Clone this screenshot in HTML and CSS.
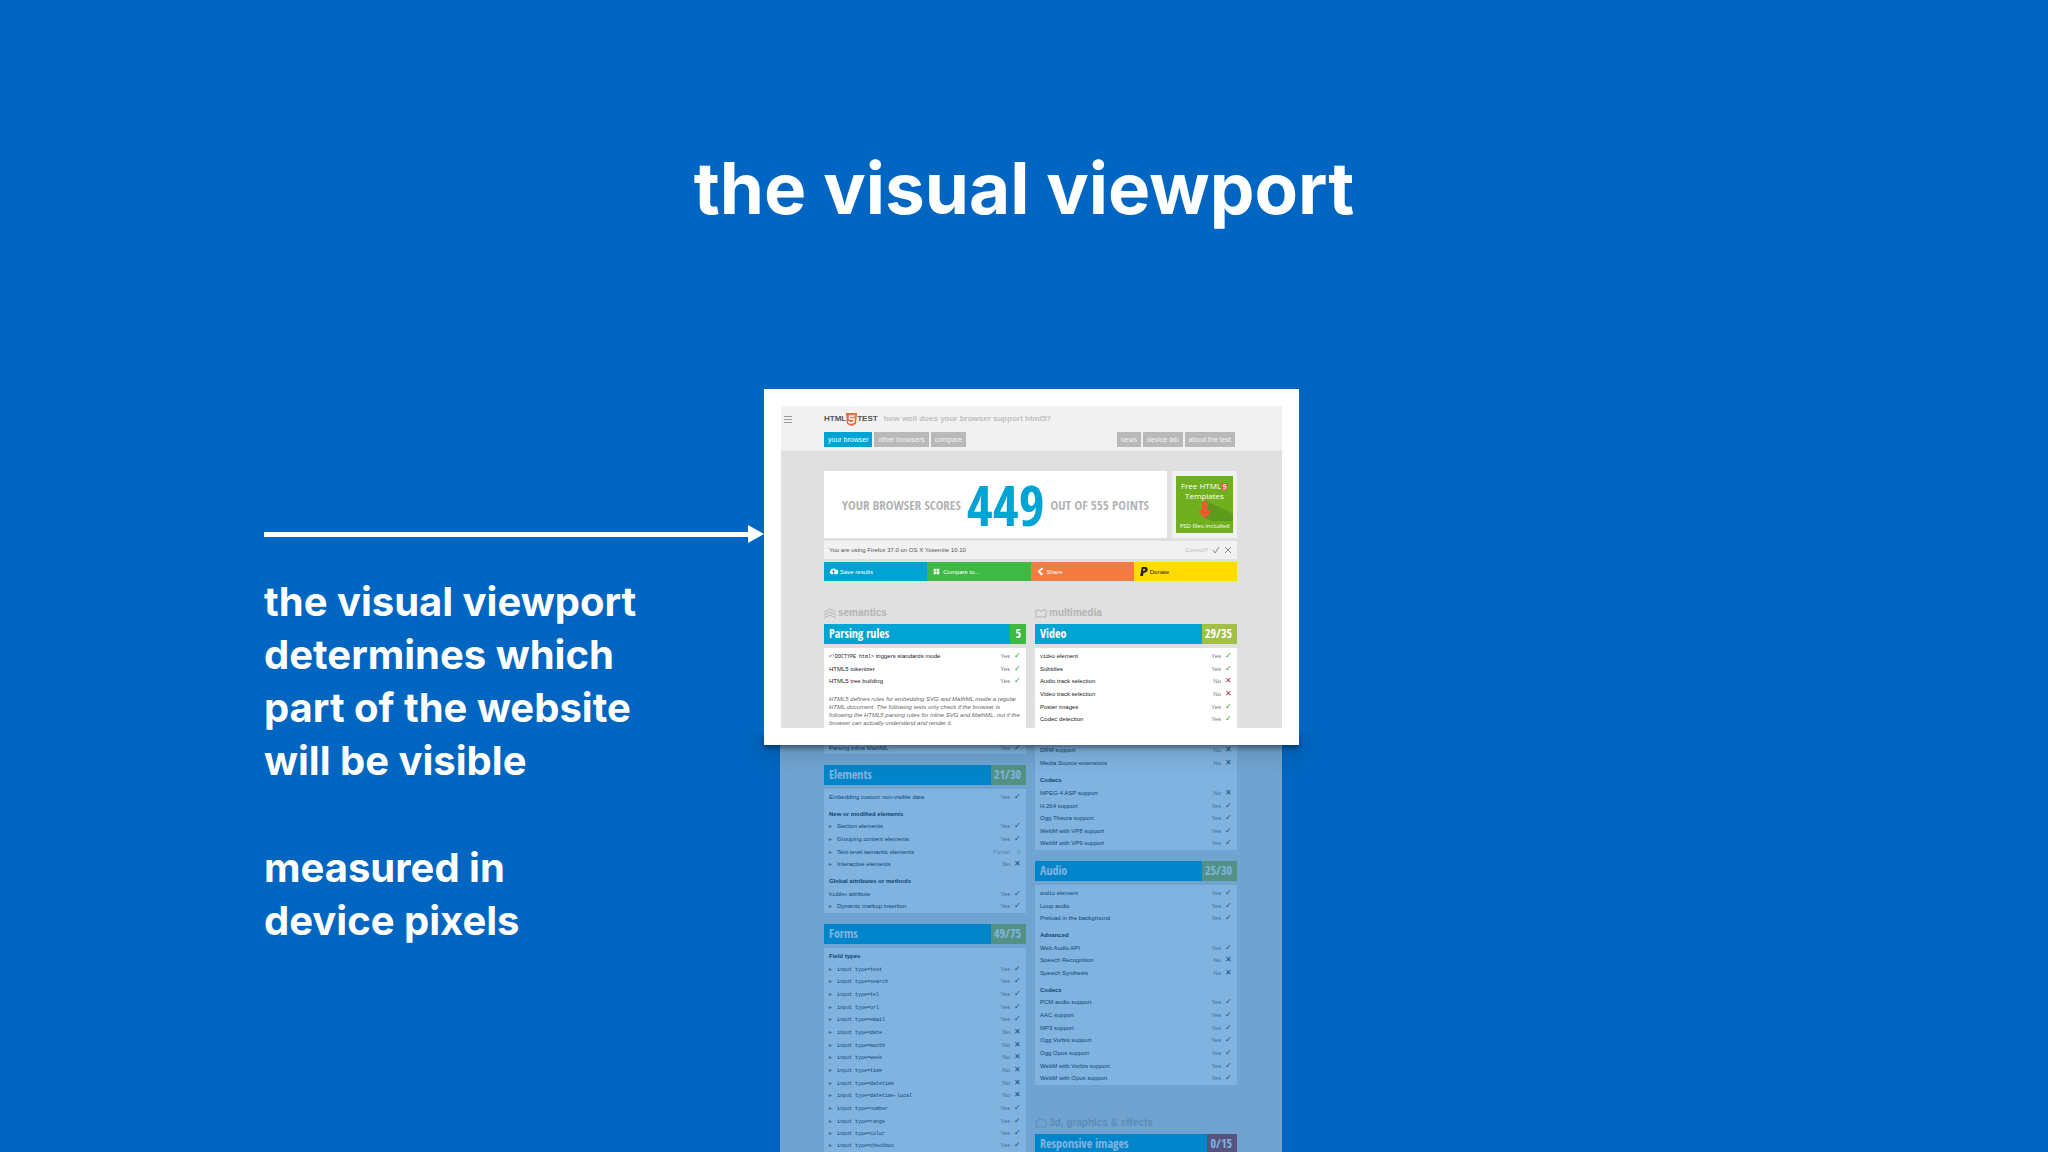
FILE: index.html
```
<!DOCTYPE html>
<html lang="en">
<head>
    <meta charset="UTF-8">
    <meta name="viewport" content="width=device-width, initial-scale=1.0">
    <title>The visual viewport</title>
    <link rel="stylesheet" href="styles.css">
</head>
<body>
    <h1>the visual viewport</h1>

    <main class="slide">
        <section class="notes">
            <div class="arrow">
                <span class="arrow-line"></span>
                <span class="arrow-head"></span>
            </div>
            <p>the visual viewport<br>determines which<br>part of the website<br>will be visible</p>
            <p>measured in<br>device pixels</p>
        </section>

        <section class="device">
            <div class="viewport">
                <header class="site-header">
                    <button class="menu" aria-label="Menu"></button>
                    <div class="brand">
                        <span class="logo">HTML<svg class="shield" viewBox="0 0 22 26"><path fill="#e8663c" d="M0 0h22l-2 22-9 4-9-4z"/><path fill="#f0803f" d="M11 2v22l7-3 2-19z"/><path fill="none" stroke="#fff" stroke-width="3" d="M17 6H7v6h9l-1 7-4 1-5-1-.5-3"/></svg>TEST</span>
                        <span class="tagline">how well does your browser support html5?</span>
                    </div>
                    <nav class="tabs">
                        <a class="tab active" href="#">your browser</a>
                        <a class="tab" href="#">other browsers</a>
                        <a class="tab" href="#">compare</a>
                        <span class="spacer"></span>
                        <a class="tab" href="#">news</a>
                        <a class="tab" href="#">device lab</a>
                        <a class="tab" href="#">about the test</a>
                    </nav>
                </header>

                <div class="summary">
                    <div class="top">
                        <div class="score">
                            <span>YOUR BROWSER SCORES</span>
                            <strong>449</strong>
                            <span>OUT OF 555 POINTS</span>
                        </div>
                        <a class="ad" href="#">
                            <span class="ad-body">
                                <span>Free HTML<svg class="ad-shield" viewBox="0 0 22 26"><path fill="#e8553c" d="M0 0h22l-2 22-9 4-9-4z"/><path fill="none" stroke="#fff" stroke-width="3" d="M17 6H7v6h9l-1 7-4 1-5-1"/></svg><br>Templates</span>
                                <svg class="download" viewBox="0 0 57 20"><path fill="#5c9a1c" d="M33 1l24 12v7H36l-8-3z"/><path fill="#f0592f" d="M26 0h6v9h4l-7 9-7-9h4z"/></svg>
                                <small>PSD files included</small>
                            </span>
                        </a>
                    </div>
                    <div class="agent">
                        <span>You are using Firefox 37.0 on OS X Yosemite 10.10</span>
                        <span class="spacer"></span>
                        <span class="correct">Correct?</span>
                        <button aria-label="Correct"><svg viewBox="0 0 8 8"><path d="M1 4l2 3 4-6"/></svg></button>
                        <button aria-label="Wrong"><svg viewBox="0 0 8 8"><path d="M1 1l6 6M7 1L1 7"/></svg></button>
                    </div>
                    <div class="actions">
                        <button class="save"><svg viewBox="0 0 16 16"><path d="M4 13a4 4 0 0 1-1-7 5 5 0 0 1 9-1 4 4 0 0 1 1 8H9V9h2L8 5 5 9h2v4z"/></svg>Save results</button>
                        <button class="compare"><svg viewBox="0 0 16 16"><path d="M3 3h4v4H3zM8 3h5v4H8zM3 8h4v5H3zM8 8h5v5H8z"/></svg>Compare to...</button>
                        <button class="share"><svg viewBox="0 0 16 16"><path d="M10 1l3 2-6 5 6 5-3 2-7-7z"/></svg>Share</button>
                        <button class="donate"><svg viewBox="0 0 16 16"><path fill-rule="evenodd" d="M5 0h6c4 0 5 3 4 6s-4 4-7 4l-1 6H2zM8 3L7 7c3 0 4-1 4-2s-1-2-3-2z"/></svg>Donate</button>
                    </div>
                </div>

                <div class="columns">
                    <div class="column">
                        <h2><svg viewBox="0 0 12 11"><path d="M0 4l6-3 6 3M0 7l6-3 6 3M0 10l6-3 6 3"/></svg>semantics</h2>
                        <h3>Parsing rules <span class="points full">5</span></h3>
                        <div class="card">
                            <table>
                                <tr><td><code>&lt;!DOCTYPE html&gt;</code> triggers standards mode</td><td class="yes">Yes</td></tr>
                                <tr><td>HTML5 tokenizer</td><td class="yes">Yes</td></tr>
                                <tr><td>HTML5 tree building</td><td class="yes">Yes</td></tr>
                            </table>
                            <p class="explain">HTML5 defines rules for embedding SVG and MathML inside a regular<br>HTML document. The following tests only check if the browser is<br>following the HTML5 parsing rules for inline SVG and MathML, not if the<br>browser can actually understand and render it.</p>
                        </div>
                    </div>
                    <div class="column">
                        <h2><svg viewBox="0 0 12 11"><path d="M1 2h3l1 1h2l1-1h3v7H1z"/></svg>multimedia</h2>
                        <h3>Video <span class="points">29/35</span></h3>
                        <div class="card">
                            <table>
                                <tr><td><code>video</code> element</td><td class="yes">Yes</td></tr>
                                <tr><td>Subtitles</td><td class="yes">Yes</td></tr>
                                <tr><td>Audio track selection</td><td class="no">No</td></tr>
                                <tr><td>Video track selection</td><td class="no">No</td></tr>
                                <tr><td>Poster images</td><td class="yes">Yes</td></tr>
                                <tr><td>Codec detection</td><td class="yes">Yes</td></tr>
                            </table>
                        </div>
                    </div>
                </div>
            </div>

            <div class="outside">
                <div class="columns">
                    <div class="column">
                        <div class="card continued">
                            <table>
                                <tr><td>Parsing inline MathML</td><td class="yes">Yes</td></tr>
                            </table>
                        </div>
                        <h3>Elements <span class="points">21/30</span></h3>
                        <div class="card">
                            <table>
                                <tr><td>Embedding custom non-visible data</td><td class="yes">Yes</td></tr>
                                <tr><th colspan="2">New or modified elements</th></tr>
                                <tr><td class="more">Section elements</td><td class="yes">Yes</td></tr>
                                <tr><td class="more">Grouping content elements</td><td class="yes">Yes</td></tr>
                                <tr><td class="more">Text-level semantic elements</td><td class="partial">Partial</td></tr>
                                <tr><td class="more">Interactive elements</td><td class="no">No</td></tr>
                                <tr><th colspan="2">Global attributes or methods</th></tr>
                                <tr><td><code>hidden</code> attribute</td><td class="yes">Yes</td></tr>
                                <tr><td class="more">Dynamic markup insertion</td><td class="yes">Yes</td></tr>
                            </table>
                        </div>
                        <h3>Forms <span class="points">49/75</span></h3>
                        <div class="card">
                            <table>
                                <tr><th colspan="2">Field types</th></tr>
                                <tr><td class="more"><code>input type=text</code></td><td class="yes">Yes</td></tr>
                                <tr><td class="more"><code>input type=search</code></td><td class="yes">Yes</td></tr>
                                <tr><td class="more"><code>input type=tel</code></td><td class="yes">Yes</td></tr>
                                <tr><td class="more"><code>input type=url</code></td><td class="yes">Yes</td></tr>
                                <tr><td class="more"><code>input type=email</code></td><td class="yes">Yes</td></tr>
                                <tr><td class="more"><code>input type=date</code></td><td class="no">No</td></tr>
                                <tr><td class="more"><code>input type=month</code></td><td class="no">No</td></tr>
                                <tr><td class="more"><code>input type=week</code></td><td class="no">No</td></tr>
                                <tr><td class="more"><code>input type=time</code></td><td class="no">No</td></tr>
                                <tr><td class="more"><code>input type=datetime</code></td><td class="no">No</td></tr>
                                <tr><td class="more"><code>input type=datetime-local</code></td><td class="no">No</td></tr>
                                <tr><td class="more"><code>input type=number</code></td><td class="yes">Yes</td></tr>
                                <tr><td class="more"><code>input type=range</code></td><td class="yes">Yes</td></tr>
                                <tr><td class="more"><code>input type=color</code></td><td class="yes">Yes</td></tr>
                                <tr><td class="more"><code>input type=checkbox</code></td><td class="yes">Yes</td></tr>
                            </table>
                        </div>
                    </div>
                    <div class="column">
                        <div class="card continued">
                            <table>
                                <tr><td>DRM support</td><td class="no">No</td></tr>
                                <tr><td>Media Source extensions</td><td class="no">No</td></tr>
                                <tr><th colspan="2">Codecs</th></tr>
                                <tr><td>MPEG-4 ASP support</td><td class="no">No</td></tr>
                                <tr><td>H.264 support</td><td class="yes">Yes</td></tr>
                                <tr><td>Ogg Theora support</td><td class="yes">Yes</td></tr>
                                <tr><td>WebM with VP8 support</td><td class="yes">Yes</td></tr>
                                <tr><td>WebM with VP9 support</td><td class="yes">Yes</td></tr>
                            </table>
                        </div>
                        <h3>Audio <span class="points">25/30</span></h3>
                        <div class="card">
                            <table>
                                <tr><td><code>audio</code> element</td><td class="yes">Yes</td></tr>
                                <tr><td>Loop audio</td><td class="yes">Yes</td></tr>
                                <tr><td>Preload in the background</td><td class="yes">Yes</td></tr>
                                <tr><th colspan="2">Advanced</th></tr>
                                <tr><td>Web Audio API</td><td class="yes">Yes</td></tr>
                                <tr><td>Speech Recognition</td><td class="no">No</td></tr>
                                <tr><td>Speech Synthesis</td><td class="no">No</td></tr>
                                <tr><th colspan="2">Codecs</th></tr>
                                <tr><td>PCM audio support</td><td class="yes">Yes</td></tr>
                                <tr><td>AAC support</td><td class="yes">Yes</td></tr>
                                <tr><td>MP3 support</td><td class="yes">Yes</td></tr>
                                <tr><td>Ogg Vorbis support</td><td class="yes">Yes</td></tr>
                                <tr><td>Ogg Opus support</td><td class="yes">Yes</td></tr>
                                <tr><td>WebM with Vorbis support</td><td class="yes">Yes</td></tr>
                                <tr><td>WebM with Opus support</td><td class="yes">Yes</td></tr>
                            </table>
                        </div>
                        <h2><svg viewBox="0 0 12 11"><path d="M1 3h2l1-2h4l1 2h2v6H1z"/></svg>3d, graphics &amp; effects</h2>
                        <h3>Responsive images <span class="points none">0/15</span></h3>
                    </div>
                </div>
            </div>
        </section>
    </main>
</body>
</html>
```

FILE: styles.css
```
* {
    box-sizing: border-box;
}
body {
    display: flex;
    flex-direction: column;
    height: 100vh;
    margin: 0;
    overflow: hidden;
    background: #0066c1;
    color: #fff;
    font-family: Inter, sans-serif;
}
h1 {
    margin: 0;
    padding: 145px 0 158px;
    font-size: 71px;
    font-weight: 700;
    line-height: 86px;
    text-align: center;
}
button {
    display: flex;
    align-items: center;
    padding: 0;
    border: none;
    background: none;
    color: inherit;
    font: inherit;
    cursor: pointer;
}
a {
    color: inherit;
    text-decoration: none;
}
.spacer {
    flex: 1;
}

/* slide text and arrow */
.slide {
    display: grid;
    grid-template-columns: 500fr 535fr;
    padding: 0 calc(749 / 2048 * 100%) 0 calc(264 / 2048 * 100%);
}
.notes {
    padding-top: 136px;
    font-size: 40px;
    font-weight: 700;
    line-height: 53px;
}
.notes p {
    margin: 0 0 54px;
}
.arrow {
    display: flex;
    align-items: center;
    margin-bottom: 32px;
}
.arrow-line {
    flex: 1;
    height: 5px;
    background: #fff;
}
.arrow-head {
    border: 9px solid transparent;
    border-left: 16px solid #fff;
    border-right: 0;
}

/* the website, seen through the viewport */
.device {
    position: relative;
    font: 6px/12px "Liberation Sans", sans-serif;
    color: #222;
}
.viewport {
    position: relative;
    z-index: 1;
    border: 17px solid #fff;
    background: #e0e0e0;
}
.viewport::after {
    content: "";
    position: absolute;
    z-index: -1;
    right: -17px;
    bottom: -17px;
    left: -17px;
    height: 12px;
    box-shadow: 0 3px 5px rgba(0, 0, 0, 0.4), 0 4px 24px rgba(0, 0, 0, 0.25);
    clip-path: inset(0 -40px -40px -40px);
}
.outside {
    margin: -18px 17px 0 16px;
    background: #e0e0e0;
    opacity: 0.5;
}
.site-header {
    display: grid;
    grid-template-columns: 43px 1fr;
    padding: 5px 47px 3px 0;
    border-bottom: 1px solid #e9e9e9;
    background: #f1f1f1;
}
.menu {
    width: 8px;
    height: 7px;
    margin: 5px 0 0 3px;
    border: solid #999;
    border-width: 1px 0;
    background: linear-gradient(#999, #999) center / 100% 1px no-repeat;
}
.brand {
    display: flex;
    align-items: center;
    gap: 6px;
    height: 16px;
    margin-bottom: 5px;
    font-weight: bold;
}
.logo {
    display: flex;
    align-items: center;
    color: #555;
    font-size: 8px;
}
.shield {
    width: 11px;
    height: 13px;
}
.tagline {
    color: #c0c0c0;
    font-size: 8px;
}
.tabs {
    display: flex;
    grid-column: 2;
    gap: 2px;
}
.tab {
    padding: 0 4px;
    background: #b9b9b9;
    color: #f4f4f4;
    font-size: 7px;
    line-height: 15px;
}
.tab.active {
    background: #00a4d3;
    color: #fff;
}
.summary {
    display: flex;
    flex-direction: column;
    gap: 3px;
    padding: 20px 45px 25px 43px;
}
.top {
    display: flex;
    gap: 5px;
}
.score {
    display: flex;
    flex: 1;
    align-items: center;
    justify-content: center;
    gap: 6px;
    height: 67px;
    background: #fff;
    color: #b3b3b3;
    font: bold 13px "Open Sans Condensed", "Open Sans", sans-serif;
}
.score strong {
    color: #00a4d3;
    font-size: 56px;
    line-height: 67px;
}
.ad {
    width: 65px;
    padding: 5px 4px;
    background: #f1f1f1;
}
.ad-body {
    display: flex;
    flex-direction: column;
    align-items: center;
    height: 57px;
    padding-top: 5px;
    background: #70b01f;
    color: #fff;
    font: 8px/9px "Open Sans", sans-serif;
    text-align: center;
}
.ad-shield {
    width: 7px;
    height: 8px;
    vertical-align: middle;
}
.ad small {
    font-size: 6px;
}
.download {
    width: 57px;
    height: 22px;
}
.agent {
    display: flex;
    align-items: center;
    gap: 4px;
    height: 18px;
    padding: 0 5px;
    background: #f1f1f1;
    color: #555;
}
.agent svg {
    width: 8px;
    height: 8px;
    fill: none;
    stroke: #888;
}
.correct {
    color: #bbb;
}
.actions {
    display: grid;
    grid-template-columns: repeat(4, 1fr);
}
.actions button {
    gap: 2px;
    height: 19px;
    padding-left: 5px;
    color: #fff;
}
.actions svg {
    width: 9px;
    height: 9px;
    fill: currentColor;
}
.save {
    background: #00a4d3;
}
.compare {
    background: #3eb944;
}
.share {
    background: #f47b42;
}
.actions .donate {
    background: #ffdc00;
    color: #222;
}

/* results */
.columns {
    display: grid;
    grid-template-columns: 1fr 1fr;
    gap: 9px;
    padding: 0 45px 0 43px;
}
.outside .columns {
    padding-left: 44px;
}
.column {
    display: flex;
    flex-direction: column;
}
h2 {
    display: flex;
    align-items: center;
    gap: 2px;
    margin: 0 0 4px;
    color: #b3b3b3;
    font-size: 10px;
    line-height: 14px;
}
h2 svg {
    width: 12px;
    height: 11px;
    fill: none;
    stroke: #b3b3b3;
}
h3 {
    display: flex;
    justify-content: space-between;
    margin: 0 0 4px;
    padding-left: 5px;
    background: #00a4d3;
    color: #fff;
    font: bold 12px/20px "Open Sans Condensed", "Open Sans", sans-serif;
}
.points {
    padding: 0 5px 0 3px;
    background: #a3bf48;
}
.points.full {
    padding-left: 5px;
    background: #3eb944;
}
.points.none {
    background: #a8433f;
}
.card {
    padding: 1px 5px 0;
    background: #fff;
}
.viewport .card {
    flex: 1;
}
.outside .card {
    margin-bottom: 11px;
}
.outside .card.continued {
    padding-top: 14px;
}
.column + .column .card.continued {
    padding-top: 16px;
}
.outside h2 {
    margin-top: 20px;
}
table {
    width: 100%;
    border-collapse: collapse;
}
tr {
    height: 13px;
}
tr:nth-child(3n) {
    height: 12px;
}
td, th {
    padding: 0;
    text-align: left;
    vertical-align: bottom;
}
tr + tr th {
    padding-top: 5px;
}
tr:first-child ~ tr:last-child td {
    padding-bottom: 1px;
}
code {
    font: 5px "Liberation Mono", monospace;
}
.more::before {
    content: "▸";
    display: inline-block;
    width: 8px;
    color: #777;
}
.yes, .no, .partial {
    color: #777;
    text-align: right;
    white-space: nowrap;
}
.yes::after, .no::after, .partial::after {
    content: "✓";
    display: inline-block;
    width: 7px;
    margin-left: 4px;
    color: #2f8f3a;
    font-size: 8px;
    line-height: 10px;
}
.no::after {
    content: "✕";
    color: #b0304a;
}
.partial::after {
    content: "○";
}
.outside .yes::after, .outside .no::after {
    color: #333;
}
.partial {
    color: #aaa;
}
.explain {
    margin: 7px 0 0;
    padding-bottom: 1px;
    color: #666;
    font-style: italic;
    line-height: 8px;
    white-space: nowrap;
}
```
